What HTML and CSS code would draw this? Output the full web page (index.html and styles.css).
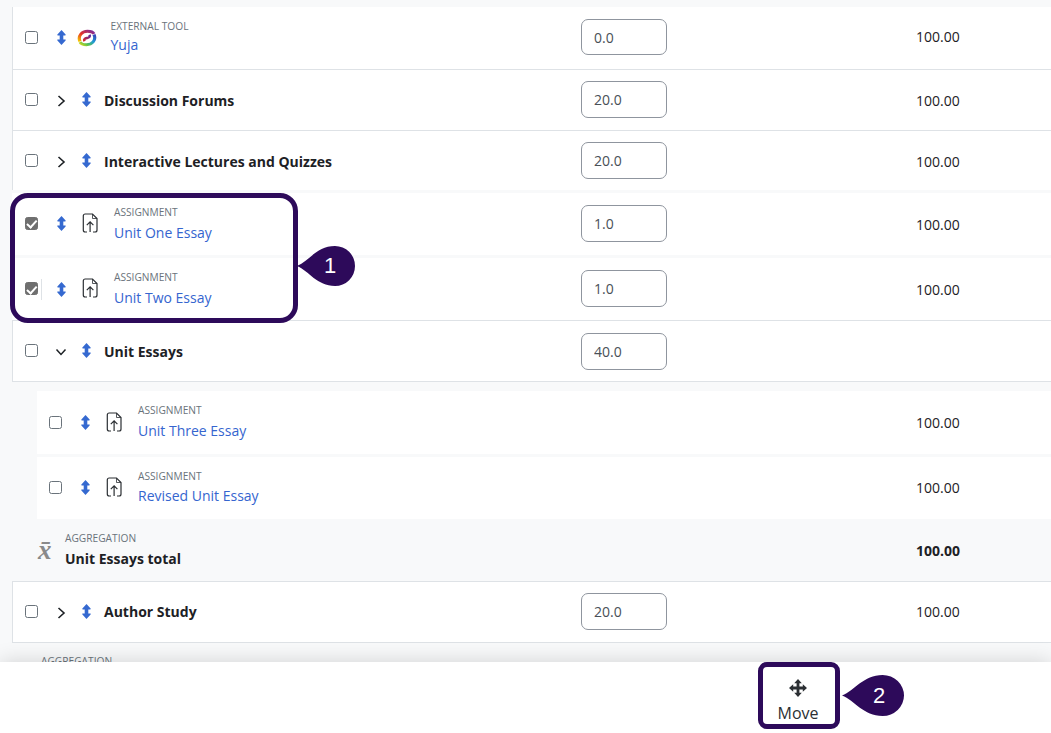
FILE: index.html
```html
<!DOCTYPE html>
<html lang="en">
<head>
<meta charset="utf-8">
<title>Gradebook setup</title>
<link rel="stylesheet" href="styles.css">
</head>
<body>
<svg class="defs" width="0" height="0" aria-hidden="true">
  <symbol id="updown" viewBox="0 0 9 15"><path d="M4.500 0 8.600 4.600c.3.400.1.900-.4.900H6.300v4h1.900c.5 0 .7.500.4.900L4.500 15 .4 10.400c-.3-.4-.1-.9.4-.9h1.900v-4H.8c-.5 0-.7-.5-.4-.9Z" fill="#3569d0"/></symbol>
  <symbol id="right" viewBox="0 0 10 12"><path d="M2.500 1 8 6l-5.500 5" fill="none" stroke="#1d2125" stroke-width="1.600"/></symbol>
  <symbol id="down" viewBox="0 0 12 10"><path d="M1.500 2.500 6 7.500l4.500-5" fill="none" stroke="#1d2125" stroke-width="1.500"/></symbol>
  <symbol id="assign" viewBox="0 0 16 20"><path d="M5 19H3.200C2 19 1.300 18.200 1.300 17V3C1.300 1.800 2 1 3.200 1h7.300L15 5.500V17c0 1.200-.7 2-1.900 2H11" fill="none" stroke="#2b2f33" stroke-width="1.200"/><path d="M10.500 1v4.500H15" fill="none" stroke="#2b2f33" stroke-width=".8"/><path d="M8.100 19V9M4.800 12.200l3.300-3.300 3.300 3.300" fill="none" stroke="#2b2f33" stroke-width="1.200"/></symbol>
</svg>

<main class="page">
  <div class="row row-item row-top">
    <div class="name-cell">
      <input class="check" type="checkbox">
      <svg class="drag drag-item"><use href="#updown"/></svg>
      <svg class="yuja" viewBox="0 0 20 20" preserveAspectRatio="none">
        <defs>
          <linearGradient id="yg1" x1="0" y1="1" x2="1" y2="0"><stop offset="0" stop-color="#f7c600"/><stop offset=".45" stop-color="#e5302a"/><stop offset="1" stop-color="#7b2a9c"/></linearGradient>
          <linearGradient id="yg2" x1="1" y1="0" x2="0" y2="1"><stop offset="0" stop-color="#3a3db5"/><stop offset=".4" stop-color="#1e9bd7"/><stop offset=".75" stop-color="#5cc24a"/><stop offset="1" stop-color="#d8d820"/></linearGradient>
          <linearGradient id="yg3" x1="0" y1="1" x2="1" y2="0"><stop offset="0" stop-color="#d8242c"/><stop offset="1" stop-color="#5a2aa0"/></linearGradient>
        </defs>
        <path d="M3 14C.5 7.500 5 2.500 10.500 2.500c3.500 0 5.500 1 6.500 3" fill="none" stroke="url(#yg1)" stroke-width="3.200"/>
        <path d="M17 6C19.500 12.500 15 17.500 9.500 17.500c-3.500 0-5.500-1-6.500-3" fill="none" stroke="url(#yg2)" stroke-width="3.200"/>
        <path d="M7.500 13.500c-1-2 .5-3 2.500-3.500 2-.5 3.500-1.500 2.500-3.500" fill="none" stroke="url(#yg3)" stroke-width="2.600"/>
      </svg>
      <div class="label label-yuja"><span class="kind">EXTERNAL TOOL</span><a class="link">Yuja</a></div>
    </div>
    <div class="weight-cell"><input class="weight weight-short" value="0.0"></div>
    <div class="max-cell">100.00</div>
  </div>

  <div class="row row-cat">
    <div class="name-cell">
      <input class="check" type="checkbox">
      <svg class="chev"><use href="#right"/></svg>
      <svg class="drag"><use href="#updown"/></svg>
      <strong class="cat-name">Discussion Forums</strong>
    </div>
    <div class="weight-cell"><input class="weight" value="20.0"></div>
    <div class="max-cell">100.00</div>
  </div>

  <div class="row row-cat row-cat-open-end">
    <div class="name-cell">
      <input class="check" type="checkbox">
      <svg class="chev"><use href="#right"/></svg>
      <svg class="drag"><use href="#updown"/></svg>
      <strong class="cat-name">Interactive Lectures and Quizzes</strong>
    </div>
    <div class="weight-cell"><input class="weight" value="20.0"></div>
    <div class="max-cell">100.00</div>
  </div>

  <div class="row row-item row-a1">
    <div class="name-cell">
      <input class="check" type="checkbox" checked>
      <svg class="drag drag-item"><use href="#updown"/></svg>
      <svg class="doc"><use href="#assign"/></svg>
      <div class="label"><span class="kind">ASSIGNMENT</span><a class="link">Unit One Essay</a></div>
    </div>
    <div class="weight-cell"><input class="weight" value="1.0"></div>
    <div class="max-cell">100.00</div>
  </div>

  <div class="row row-item row-a2">
    <div class="name-cell">
      <input class="check" type="checkbox" checked>
      <span class="sep"></span>
      <svg class="drag drag-after-sep"><use href="#updown"/></svg>
      <svg class="doc"><use href="#assign"/></svg>
      <div class="label"><span class="kind">ASSIGNMENT</span><a class="link">Unit Two Essay</a></div>
    </div>
    <div class="weight-cell"><input class="weight" value="1.0"></div>
    <div class="max-cell">100.00</div>
  </div>

  <div class="row row-cat row-cat-boxed">
    <div class="name-cell">
      <input class="check" type="checkbox">
      <svg class="chev chev-down"><use href="#down"/></svg>
      <svg class="drag"><use href="#updown"/></svg>
      <strong class="cat-name">Unit Essays</strong>
    </div>
    <div class="weight-cell"><input class="weight weight-open" value="40.0"></div>
    <div class="max-cell"></div>
  </div>

  <div class="row row-item nested row-n1">
    <div class="name-cell">
      <input class="check" type="checkbox">
      <svg class="drag drag-item"><use href="#updown"/></svg>
      <svg class="doc"><use href="#assign"/></svg>
      <div class="label"><span class="kind">ASSIGNMENT</span><a class="link">Unit Three Essay</a></div>
    </div>
    <div class="weight-cell"></div>
    <div class="max-cell">100.00</div>
  </div>

  <div class="row row-item nested row-n2">
    <div class="name-cell">
      <input class="check" type="checkbox">
      <svg class="drag drag-item"><use href="#updown"/></svg>
      <svg class="doc"><use href="#assign"/></svg>
      <div class="label"><span class="kind">ASSIGNMENT</span><a class="link">Revised Unit Essay</a></div>
    </div>
    <div class="weight-cell"></div>
    <div class="max-cell">100.00</div>
  </div>

  <div class="row row-total nested">
    <div class="name-cell">
      <span class="xbar">x̄</span>
      <div class="label"><span class="kind">AGGREGATION</span><strong class="total-name">Unit Essays total</strong></div>
    </div>
    <div class="weight-cell"></div>
    <div class="max-cell max-bold">100.00</div>
  </div>

  <div class="row row-cat row-author">
    <div class="name-cell">
      <input class="check" type="checkbox">
      <svg class="chev"><use href="#right"/></svg>
      <svg class="drag"><use href="#updown"/></svg>
      <strong class="cat-name">Author Study</strong>
    </div>
    <div class="weight-cell"><input class="weight" value="20.0"></div>
    <div class="max-cell">100.00</div>
  </div>

  <div class="tail"><span class="kind">AGGREGATION</span></div>
</main>

<footer class="bar">
  <button class="move" type="button">
    <svg class="move-icon" viewBox="0 0 18 18"><path d="M9 0 12.800 4.200H10.400V7.600h3.400V5.200L18 9l-4.200 3.800v-2.400h-3.400v3.400h2.400L9 18l-3.800-4.200h2.400v-3.400H4.200v2.400L0 9l4.200-3.800v2.400h3.400V4.200H5.200Z" fill="#2b2f33"/></svg>
    <span>Move</span>
  </button>
</footer>

<div class="ring ring-one"></div>
<div class="ring ring-two"></div>
<div class="tag tag-one"><svg class="tear" viewBox="0 0 58 40" preserveAspectRatio="none"><path d="M0 20C12 15 20 0 38 0a20 20 0 0 1 0 40C20 40 12 25 0 20Z" fill="#2d0a5a"/></svg><span class="tag-num">1</span></div>
<div class="tag tag-two"><svg class="tear" viewBox="0 0 58 40" preserveAspectRatio="none"><path d="M0 20C12 15 20 0 38 0a20 20 0 0 1 0 40C20 40 12 25 0 20Z" fill="#2d0a5a"/></svg><span class="tag-num">2</span></div>
</body>
</html>
```

FILE: styles.css
```css
* { box-sizing: border-box; }
html, body { margin: 0; height: 733px; overflow: hidden; }
body {
  background: #f8f9fa;
  color: #1d2125;
  font-family: "Open Sans", "Noto Sans", sans-serif;
  font-size: 14px;
  position: relative;
}
.defs { position: absolute; }
.page { padding: 7px 0 0 12px; }

.row {
  display: grid;
  grid-template-columns: 569px 335px 1fr;
  align-items: center;
  background: #fff;
}
.row.nested { grid-template-columns: 544px 335px 1fr; margin-left: 25px; }

.row-top { height: 63px; border-bottom: 1px solid #dee2e6; }
.row-cat { height: 61px; border-bottom: 1px solid #dee2e6; }
.row-cat-open-end { height: 59px; border-bottom: 0; margin-bottom: 3px; }
.row-top, .row-cat { box-shadow: inset 1px 0 0 #dee2e6; }
.row-a1 { height: 62px; margin-bottom: 3px; }
.row-a2 { height: 63px; border-bottom: 1px solid #dee2e6; }
.row-cat-boxed { margin-bottom: 9px; }
.row-n1 { height: 63px; margin-bottom: 3px; }
.row-n2 { height: 62px; }
.row-total { height: 62px; background: #f8f9fa; }
.row-author { height: 62px; margin-bottom: 10px; box-shadow: inset 1px 0 0 #dee2e6, inset 0 1px 0 #dee2e6; }

.name-cell { display: flex; align-items: center; padding-left: 13px; height: 100%; }
.nested .name-cell { padding-left: 12px; }
.check {
  appearance: none;
  width: 13px;
  height: 13px;
  margin: -1px 0 0;
  border: 1px solid #6a737b;
  border-radius: 2.500px;
  background: #fff;
  flex: none;
}
.row-top .check, .row-a1 .check { margin-top: -2px; }
.check:checked {
  background: #6f6f6f;
  border-color: #6f6f6f;
  position: relative;
}
.check:checked::after {
  content: "";
  position: absolute;
  left: 3px;
  top: .5px;
  width: 4px;
  height: 7.500px;
  border: solid #fff;
  border-width: 0 2px 2px 0;
  transform: rotate(42deg);
}
.sep { width: 1px; height: 21px; margin: 0 0 0 3px; background: #dee2e6; flex: none; }
.drag { width: 9px; height: 15px; margin: -1px 0 0 16px; flex: none; }
.drag-item { margin-left: 18.500px; }
.drag-after-sep { margin-left: 14.500px; margin-top: 0; }
.chev { width: 10px; height: 12px; margin: 2px 0 0 18px; flex: none; }
.chev-down { width: 12px; height: 10px; margin-left: 17px; }
.chev-down + .drag { margin-left: 15px; }
.doc { width: 16px; height: 20px; margin: -2px 0 0 16px; flex: none; }
.yuja { width: 20px; height: 18px; margin: -1px 0 0 11px; flex: none; }
.cat-name { margin-left: 13px; font-size: 14px; font-weight: 700; margin-top: 1px; }
.row-author .cat-name { margin-top: 0; }
.label { display: flex; flex-direction: column; margin-left: 16.500px; }
.nested .label { margin-top: -1px; }
.row-n2 .link { margin-top: 3px; }
.label-yuja { margin-left: 14px; margin-top: -2px; }
.kind { font-size: 10.200px; line-height: 14px; color: #6a737b; }
.link { font-size: 14px; line-height: 20px; margin-top: 4px; color: #3565cf; }
.label-yuja .link { margin-top: 2px; }
.total-name { font-size: 14px; line-height: 20px; margin-top: 4px; font-weight: 700; }

.weight {
  display: block;
  width: 86px;
  height: 37px;
  margin-top: -1px;
  border: 1px solid #8f959e;
  border-radius: 7px;
  padding: 0 12px;
  font: inherit;
  font-size: 14px;
  color: #495057;
  background: #fff;
  outline: 0;
}
.weight-short { height: 36px; margin-top: -2px; }
.weight-open { margin-top: 0; }
.max-cell { font-size: 14px; }
.row-top .max-cell { margin-top: -4px; }
.row-cat-open-end .max-cell { margin-top: 1px; }
.row-n2 .max-cell { margin-top: -2px; }
.max-bold { font-weight: 700; }

.xbar {
  font-family: "Liberation Serif", serif;
  font-style: italic;
  font-weight: 700;
  font-size: 27px;
  line-height: 24px;
  color: #8a8a8a;
  width: 16px;
  margin-left: -11px;
  margin-top: 0;
}
.row-total .label { margin-left: 11px; margin-top: 0; }

.tail { padding-left: 29px; line-height: 14px; }

.bar {
  position: absolute;
  left: 0; right: 0; top: 662px;
  height: 71px;
  background: #fff;
  box-shadow: 0 0 20px rgba(0, 0, 0, .16);
  padding-left: 758px;
}
.move {
  width: 80px;
  height: 67px;
  padding: 16px 0 0;
  margin: 1px 0 0;
  border: 0;
  background: none;
  display: flex;
  flex-direction: column;
  align-items: center;
  font: inherit;
  font-size: 16px;
  color: #2b2f33;
}
.move-icon { width: 18px; height: 18px; flex: none; }
.move span { margin-top: 5px; line-height: 22px; }

.ring { position: absolute; border: 5px solid #2d0a5a; pointer-events: none; }
.ring-one { left: 10px; top: 193px; width: 288px; height: 130px; border-radius: 18px; }
.ring-two { left: 758px; top: 662px; width: 82px; height: 67px; border-radius: 9px; }

.tag { position: absolute; color: #fff; }
.tear { display: block; width: 100%; height: 100%; }
.tag-one { left: 297px; top: 246px; width: 58px; height: 40px; }
.tag-two { left: 842px; top: 675px; width: 62px; height: 41px; }
.tag-num {
  position: absolute;
  right: 0; top: 0; bottom: 0;
  display: flex;
  align-items: center;
  justify-content: center;
  font-family: "Liberation Sans", sans-serif;
  font-size: 22px;
}
.tag-one .tag-num { left: 8px; }
.tag-two .tag-num { left: 12px; }
```
